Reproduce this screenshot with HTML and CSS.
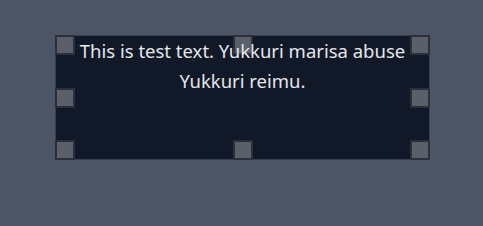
FILE: index.html
```html
<!DOCTYPE html>
<html lang="en">
<head>
    <meta charset="UTF-8">
    <title>Text box</title>
    <link rel="stylesheet" href="styles.css">
</head>
<body>
    <div class="stage">
        <div class="textbox">
            <span class="handle h-tl"></span>
            <span class="handle h-tm"></span>
            <span class="handle h-tr"></span>
            <span class="handle h-ml"></span>
            <span class="handle h-mr"></span>
            <span class="handle h-bl"></span>
            <span class="handle h-bm"></span>
            <span class="handle h-br"></span>
            <p class="text">This is test text. Yukkuri marisa abuse Yukkuri reimu.</p>
        </div>
    </div>
</body>
</html>
```

FILE: styles.css
```css
body {
    margin: 0;
    background-color: #4b5563;
    font-family: "Noto Sans", "Open Sans", sans-serif;
}
.stage {
    padding: 35px 0 0 55px;
}
.textbox {
    position: relative;
    box-sizing: border-box;
    width: 375px;
    height: 125px;
    background-color: #111827;
    border: 1px solid #374151;
}
.text {
    position: relative;
    margin: 0;
    padding: 0 10px;
    color: #e5e7eb;
    font-size: 18.5px;
    line-height: 30px;
    text-align: center;
}
.handle {
    position: absolute;
    box-sizing: border-box;
    width: 20px;
    height: 20px;
    background-color: #5b5f69;
    border: 2px solid #2b303b;
}
.h-tl { left: -1px; top: -1px; }
.h-tm { left: 176.5px; top: -1px; }
.h-tr { right: -1px; top: -1px; }
.h-ml { left: -1px; top: 51.5px; }
.h-mr { right: -1px; top: 51.5px; }
.h-bl { left: -1px; bottom: -1px; }
.h-bm { left: 176.5px; bottom: -1px; }
.h-br { right: -1px; bottom: -1px; }
```
